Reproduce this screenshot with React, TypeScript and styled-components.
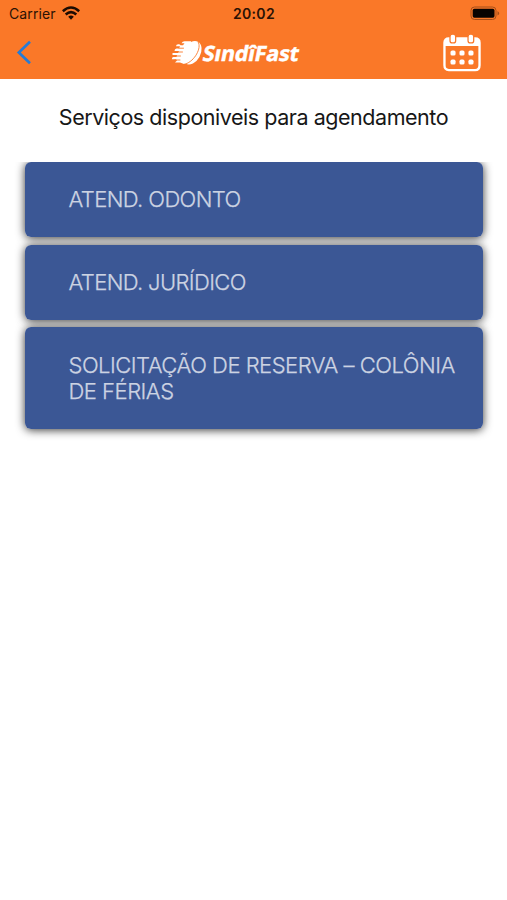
import React from "react";
import styled, { createGlobalStyle } from "styled-components";

const GlobalStyle = createGlobalStyle`
  * { box-sizing: border-box; }
  body { margin: 0; background: #fff; font-family: Inter, "Liberation Sans", sans-serif; }
`;

const Screen = styled.div`
  display: flex;
  flex-direction: column;
  min-height: 900px;
  background: #fff;
  overflow: hidden;
`;

const Header = styled.header`
  height: 79px;
  flex: none;
  background: #fa7828;
`;

const StatusBar = styled.div`
  display: grid;
  grid-template-columns: 1fr auto 1fr;
  align-items: center;
  height: 27px;
  padding: 0 6px 0 9px;
  color: #2b1204;
`;

const Carrier = styled.div`
  display: flex;
  align-items: center;
  gap: 6px;
  font-size: 14px;
  letter-spacing: 0.1px;
`;

const Clock = styled.div`
  margin-right: 2px;
  font-size: 14px;
  font-weight: 600;
  letter-spacing: 0.3px;
`;

const Battery = styled.svg`
  justify-self: end;
`;

const NavBar = styled.nav`
  display: grid;
  grid-template-columns: 155px auto 1fr;
  align-items: center;
  height: 51px;
  padding: 0 26px 0 16px;
`;

const NavButton = styled.button<{ $end?: boolean }>`
  display: flex;
  justify-self: ${(p) => (p.$end ? "end" : "start")};
  padding: 0;
  border: 0;
  background: none;
`;

const LogoMark = styled.svg`
  overflow: visible;
`;

const Title = styled.h1`
  margin: 26px 0 0;
  height: 57px;
  font-size: 21.5px;
  line-height: 24px;
  font-weight: 400;
  letter-spacing: -0.46px;
  text-align: center;
  white-space: nowrap;
  color: #171717;
`;

const List = styled.ul`
  display: flex;
  flex-direction: column;
  gap: 7.5px;
  margin: 0;
  padding: 0 24.5px 20px 25px;
  list-style: none;
  overflow: hidden;
  isolation: isolate;
`;

const Card = styled.li<{ $tall?: boolean }>`
  position: relative;
  height: ${(p) => (p.$tall ? 101.5 : 75)}px;
  padding: ${(p) => (p.$tall ? 25 : 24.4)}px 0 0 43.5px;
  border-radius: 6px;
  background: #3b5795;

  /* The shadow sits below every card so it never darkens a neighbour. */
  &::before {
    content: "";
    position: absolute;
    inset: 0;
    z-index: -1;
    border-radius: inherit;
    box-shadow: 0 1px 10px rgba(0, 0, 0, 0.8);
  }
`;

const CardLabel = styled.span<{ $spacing: number }>`
  display: block;
  font-size: 22px;
  line-height: 26px;
  font-weight: 300;
  -webkit-text-stroke: 0.25px #ccd3e2;
  letter-spacing: ${(p) => p.$spacing}px;
  white-space: nowrap;
  color: #ccd3e2;
`;

const services = [
  { lines: ["ATEND. ODONTO"], spacing: -0.6 },
  { lines: ["ATEND. JURÍDICO"], spacing: -0.63 },
  { lines: ["SOLICITAÇÃO DE RESERVA – COLÔNIA", "DE FÉRIAS"], spacing: -0.5 },
];

const WifiIcon = () => (
  <svg width="18" height="15" viewBox="0 0 18 15" fill="none" stroke="#1d0c02" strokeWidth="2.6">
    <path d="M.8 5.2Q9-2.2 17.2 5.2M3.7 8.4Q9 3.9 14.3 8.4" />
    <path d="M6.2 10.8Q9 8.4 11.8 10.8L9 13.8Z" fill="#1d0c02" stroke="none" />
  </svg>
);

const BatteryIcon = () => (
  <Battery width="31" height="15" viewBox="0 0 31 15">
    <rect x="1" y="1" width="25" height="12.5" rx="3.5" fill="none" stroke="#a64e19" />
    <rect x="2.7" y="2.8" width="21.8" height="9" rx="1.7" fill="#080301" />
    <path d="M27.5 5Q31 7.3 27.5 9.5Z" fill="#a64e19" />
  </Battery>
);

const BackIcon = () => (
  <svg width="16" height="25" viewBox="0 0 16 25" fill="none">
    <path d="M14 1.7 2.8 12.5 14 23.3" stroke="#267bd5" strokeWidth="2.7" />
  </svg>
);

const Logo = () => (
  <LogoMark width="131" height="32" viewBox="0 0 131 32" role="img" aria-label="SindiFast">
    <g fill="#fff">
      <ellipse cx="20.9" cy="15.8" rx="8.6" ry="12.6" transform="rotate(29 20.9 15.8)" />
      <path d="M20 4.2H13.5Q11.5 4.4 10.5 6.2H13.5L12 8.3H9.5Q9 7 7.5 7.2 5.2 7 5 9.3H9L8 11.5H5.5Q3.5 11.5 3.5 14H8L7 16H1.5V18H6L5.5 20H2.5Q1 20 .8 22.3H5L6 23.5 4 25.5H9L13 27 20 22Z" />
    </g>
    <path d="M27 4.8C31 11 23.5 24 14.5 27" fill="none" stroke="#fa7828" strokeWidth=".9" />
    <g fill="none" stroke="#fa7828" strokeWidth=".9" strokeLinecap="round">
      <path d="M8 11.2h4.5M5 15h6.5M5 19h4.5M4 23h5" />
    </g>
    <text
      x="31"
      y="24"
      transform="translate(4.5 0) skewX(-11)"
      textLength="96"
      lengthAdjust="spacingAndGlyphs"
      fontFamily="Noto Sans, Open Sans, sans-serif"
      fontSize="21"
      fontWeight="700"
      fill="#fff"
      stroke="#fff"
      strokeWidth=".5"
    >
      SındîFast
    </text>
  </LogoMark>
);

const CalendarIcon = () => (
  <svg width="38" height="38" viewBox="0 0 39 39">
    <path
      d="M6 4.5H33Q37.5 4.5 37.5 9V32Q37.5 37 33 37H6Q1.5 37 1.5 32V9Q1.5 4.5 6 4.5Z"
      fill="none"
      stroke="#fff"
      strokeWidth="2.4"
    />
    <path d="M2 7Q3 4.5 6 4.5H33Q36 4.5 37 7V12.3H2Z" fill="#fff" />
    <g fill="#fff" stroke="#fa7828" strokeWidth="1.3">
      <rect x="7.2" y=".2" width="5.8" height="9" rx="2.4" />
      <rect x="25.7" y=".2" width="5.8" height="9" rx="2.4" />
    </g>
    <g fill="#fff">
      {[19.5, 28.8].map((y) =>
        [10.3, 19.5, 28.7].map((x) => (
          <rect key={`${x}-${y}`} x={x - 2.6} y={y - 2.6} width="5.2" height="5.2" rx="1.7" />
        )),
      )}
    </g>
  </svg>
);

export default function App() {
  return (
    <Screen>
      <GlobalStyle />
      <Header>
        <StatusBar>
          <Carrier>
            Carrier
            <WifiIcon />
          </Carrier>
          <Clock>20:02</Clock>
          <BatteryIcon />
        </StatusBar>
        <NavBar>
          <NavButton aria-label="Voltar">
            <BackIcon />
          </NavButton>
          <Logo />
          <NavButton $end aria-label="Agenda">
            <CalendarIcon />
          </NavButton>
        </NavBar>
      </Header>
      <Title>Serviços disponiveis para agendamento</Title>
      <List>
        {services.map((s) => (
          <Card key={s.lines[0]} $tall={s.lines.length > 1}>
            {s.lines.map((line) => (
              <CardLabel key={line} $spacing={s.spacing}>
                {line}
              </CardLabel>
            ))}
          </Card>
        ))}
      </List>
    </Screen>
  );
}
